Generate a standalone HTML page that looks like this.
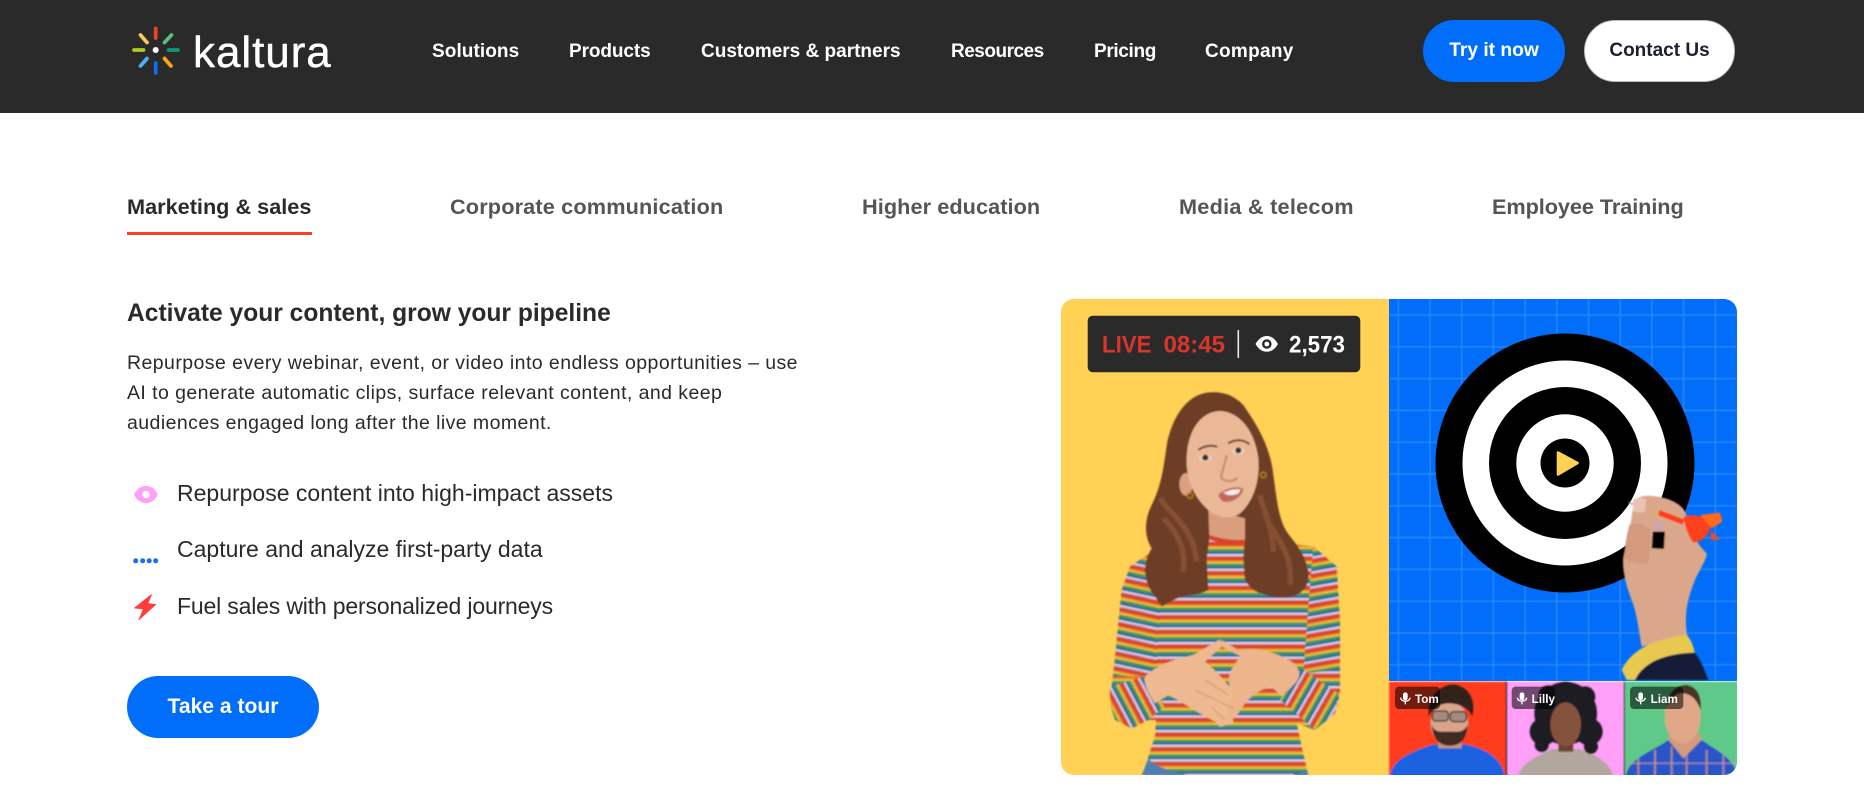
<!DOCTYPE html>
<html lang="en">
<head>
<meta charset="utf-8">
<title>Kaltura</title>
<style>
html,body{margin:0;padding:0;background:#fff;}
body{position:relative;width:1864px;height:794px;overflow:hidden;font-family:"Liberation Sans",Arial,sans-serif;}
.t{position:absolute;white-space:nowrap;line-height:30px;}
header{position:absolute;left:0;top:0;width:1864px;height:113px;background:#2a2a2a;}
.nav{color:#fff;font-weight:700;font-size:19px;top:37px;}
.tab{color:#555;font-weight:700;font-size:21.7px;top:192px;}
.btn{position:absolute;box-sizing:border-box;display:block;text-align:center;font-weight:700;border-radius:31px;}
.li{color:#2a2a2a;font-size:23px;}
.p{color:#2a2a2a;font-size:19.5px;letter-spacing:.43px;}
</style>
</head>
<body>
<header>
  <svg style="position:absolute;left:130px;top:24px" width="52" height="52" viewBox="130 24 52 52">
    <g fill="none" stroke-width="3.7" stroke-linecap="round">
      <path d="M155.7 28.5V38" stroke="#f5402c"/>
      <path d="M155.7 63V73" stroke="#0a6ff0"/>
      <path d="M134 50H143.5" stroke="#b7c81e"/>
      <path d="M168.5 50H178" stroke="#0f9a75"/>
      <path d="M140.5 35L147 42.5" stroke="#f8c85a"/>
      <path d="M171.5 35L164.5 42.5" stroke="#5cbf80"/>
      <path d="M140.5 66L147 58.5" stroke="#4fb0ef"/>
      <path d="M171 66L164.5 58.5" stroke="#fda50f"/>
    </g>
    <circle cx="155.7" cy="50" r="3" fill="#fff"/>
  </svg>
  <div class="t" style="left:193px;top:30px;color:#fff;font-size:44px;line-height:46px;letter-spacing:.95px;-webkit-text-stroke:.4px #fff">kaltura</div>
  <a class="t nav" style="left:432px;letter-spacing:.08px">Solutions</a>
  <a class="t nav" style="left:569px;letter-spacing:-.1px">Products</a>
  <a class="t nav" style="left:701px">Customers &amp; partners</a>
  <a class="t nav" style="left:951px;letter-spacing:-.5px">Resources</a>
  <a class="t nav" style="left:1094px;letter-spacing:-.35px">Pricing</a>
  <a class="t nav" style="left:1205px;letter-spacing:.3px">Company</a>
  <a class="btn" style="left:1423px;top:20px;width:142px;height:62px;background:#006efa;color:#fff;font-size:19.2px;line-height:62px">Try it now</a>
  <a class="btn" style="left:1584px;top:20px;width:151px;height:62px;background:#fff;color:#1c2030;font-size:19px;line-height:60px;border:1px solid #bdbdbd">Contact Us</a>
</header>

<nav>
  <a class="t tab" style="left:127px;color:#2a2a2a">Marketing &amp; sales</a>
  <a class="t tab" style="left:450px;letter-spacing:.15px">Corporate communication</a>
  <a class="t tab" style="left:862px;letter-spacing:.07px">Higher education</a>
  <a class="t tab" style="left:1179px;letter-spacing:.24px">Media &amp; telecom</a>
  <a class="t tab" style="left:1492px;letter-spacing:-.07px">Employee Training</a>
</nav>
<div style="position:absolute;left:127px;top:232px;width:185px;height:3px;background:#ff3d23"></div>

<h3 class="t" style="left:127px;top:299px;margin:0;font-size:24.6px;font-weight:700;color:#2a2a2a">Activate your content, grow your pipeline</h3>
<div class="t p" style="left:127px;top:348px">Repurpose every webinar, event, or video into endless opportunities – use</div>
<div class="t p" style="left:127px;top:378px">AI to generate automatic clips, surface relevant content, and keep</div>
<div class="t p" style="left:127px;top:408px">audiences engaged long after the live moment.</div>

<svg style="position:absolute;left:130px;top:480px" width="32" height="145" viewBox="130 480 32 145">
  <path d="M134 494.5C137 488.5 141 486 146 486C151 486 155 488.5 157.7 494.5C155 500.5 151 503 146 503C141 503 137 500.5 134 494.5Z" fill="#ff9ff8"/>
  <circle cx="146" cy="494.5" r="3.8" fill="#fff"/>
  <g fill="#1f6ff5"><circle cx="135.7" cy="560.8" r="2.5"/><circle cx="142.7" cy="560.8" r="2.5"/><circle cx="149.2" cy="560.8" r="2.5"/><circle cx="155.7" cy="560.8" r="2.5"/></g>
  <path d="M151.5 594.5L134.5 608L143.5 609L138.8 619.8L155.8 604.5L148 603.5Z" fill="#ff3b3b" stroke="#ff3b3b" stroke-width=".7" stroke-linejoin="round"/>
</svg>
<div class="t li" style="left:177px;top:478px">Repurpose content into high-impact assets</div>
<div class="t li" style="left:177px;top:534px">Capture and analyze first-party data</div>
<div class="t li" style="left:177px;top:591px;letter-spacing:-.17px">Fuel sales with personalized journeys</div>
<a class="btn" style="left:127px;top:676px;width:192px;height:62px;background:#006efa;color:#fff;font-size:21.1px;line-height:62px">Take a tour</a>

<svg style="position:absolute;left:1061px;top:299px" width="676" height="476" viewBox="1061 299 676 476">
  <defs>
    <clipPath id="card"><rect x="1061" y="299" width="676" height="476" rx="13"/></clipPath>
    <filter id="soft" x="-5%" y="-5%" width="110%" height="110%"><feGaussianBlur stdDeviation=".6"/></filter>
    <filter id="soft2" x="-5%" y="-5%" width="110%" height="110%"><feGaussianBlur stdDeviation="2.6"/></filter>
    <g id="st">
      <rect width="60" height="5" y="0" fill="#e5cfe6"/>
      <rect width="60" height="3" y="5" fill="#c8a6d8"/>
      <rect width="60" height="11" y="8" fill="#d8452a"/>
      <rect width="60" height="5" y="19" fill="#ee8a2e"/>
      <rect width="60" height="5" y="24" fill="#eec530"/>
      <rect width="60" height="7" y="29" fill="#3f9a5c"/>
      <rect width="60" height="8" y="36" fill="#2a6f9c"/>
    </g>
    <pattern id="p0" width="60" height="44" patternUnits="userSpaceOnUse"><use href="#st"/></pattern>
    <pattern id="p1" width="60" height="44" patternUnits="userSpaceOnUse" patternTransform="rotate(12)"><use href="#st"/></pattern>
    <pattern id="p2" width="60" height="44" patternUnits="userSpaceOnUse" patternTransform="rotate(-10)"><use href="#st"/></pattern>
    <pattern id="p3" width="60" height="44" patternUnits="userSpaceOnUse" patternTransform="rotate(62)"><use href="#st"/></pattern>
    <pattern id="p4" width="60" height="44" patternUnits="userSpaceOnUse" patternTransform="rotate(-60)"><use href="#st"/></pattern>
  </defs>
  <g clip-path="url(#card)">
    <rect x="1061" y="299" width="328" height="476" fill="#ffd155"/>
    <rect x="1389" y="299" width="348" height="382" fill="#006efa"/>
    <g stroke="#5da5fb" stroke-width="1.2" opacity=".55" filter="url(#soft)">
      <path d="M1398.3 299V681M1430 299V681M1461.7 299V681M1493.4 299V681M1525.1 299V681M1556.8 299V681M1588.5 299V681M1620.2 299V681M1651.9 299V681M1683.6 299V681M1715.3 299V681"/>
      <path d="M1389 315H1737M1389 346.8H1737M1389 378.6H1737M1389 410.4H1737M1389 442.2H1737M1389 474H1737M1389 505.8H1737M1389 537.6H1737M1389 569.4H1737M1389 601.2H1737M1389 633H1737M1389 664.8H1737"/>
    </g>

    <!-- target -->
    <circle cx="1565" cy="463" r="129.5" fill="#000"/>
    <circle cx="1565" cy="463" r="102.5" fill="#fff"/>
    <circle cx="1565" cy="463" r="76" fill="#000"/>
    <circle cx="1565" cy="463" r="48.7" fill="#fff"/>
    <circle cx="1565" cy="463" r="24.5" fill="#000"/>
    <path d="M1558 452.5L1577.5 463L1558 474.5Z" fill="#ffd155" stroke="#ffd155" stroke-width="2.6" stroke-linejoin="round"/>

    <!-- hand & dart -->
    <g transform="translate(1600 480) scale(.33333)" filter="url(#soft2)">
      <path d="M85 68L105 74" stroke="#8a8f98" stroke-width="4"/>
      <path d="M100 70C110 45 145 45 170 50C210 55 255 75 260 110C265 150 290 190 320 220C320 240 300 265 285 300C265 350 250 400 262 470C220 480 160 490 125 500C115 440 110 400 95 360C80 320 65 270 70 230C80 180 95 130 100 70Z" fill="#dba78a"/>
      <path d="M100 60C115 50 130 52 138 60L135 95C122 100 108 98 98 92Z" fill="#e9c3b0"/>
      <path d="M160 120L195 125L190 155L160 150Z" fill="#cfa6a8"/>
      <path d="M158 155L195 155L192 207L155 205Z" fill="#000"/>
      <path d="M88 135C110 125 135 130 150 150C150 180 150 220 145 248C120 255 90 245 72 235C74 200 80 165 88 135Z" fill="#d39a7e"/>
      <path d="M155 90L180 102L175 115L155 103Z" fill="#d8b070"/>
      <path d="M178 90L252 118L248 134L175 106Z" fill="#ff3a1a"/>
      <path d="M250 112C270 100 310 105 332 130C332 160 310 185 280 188C265 170 255 140 250 112Z" fill="#ff3f1c"/>
      <path d="M300 105L360 98L367 125L335 145Z" fill="#ff6a1a"/>
      <path d="M333 152L360 180L333 178Z" fill="#ff4a1c"/>
      <path d="M65 570C90 520 140 480 260 465C275 480 280 500 285 520C200 520 140 540 105 600L80 600Z" fill="#e9c850"/>
      <path d="M105 600C130 545 200 520 285 518C305 545 315 575 325 600Z" fill="#141a38"/>
    </g>

    <!-- participants -->
    <g transform="translate(1385 675) scale(.33333)" filter="url(#soft2)">
      <rect x="12" y="20" width="352" height="290" fill="#ff3d1f"/>
      <rect x="367" y="20" width="350" height="290" fill="#ff9ff8"/>
      <rect x="720" y="20" width="345" height="290" fill="#5fc98a"/>
      <rect x="362" y="20" width="5" height="290" fill="#3a2a2a"/>
      <rect x="716" y="20" width="4" height="290" fill="#3a3a3a"/>
      <!-- Tom -->
      <path d="M15 305C20 260 60 235 145 208L245 208C310 225 350 250 360 305Z" fill="#1f62e0"/>
      <rect x="160" y="180" width="70" height="40" fill="#c99278"/>
      <ellipse cx="193" cy="145" rx="56" ry="66" fill="#d9a48a"/>
      <path d="M140 150C145 200 170 212 195 212C225 212 245 195 248 150C235 175 215 170 195 170C170 170 150 175 140 150Z" fill="#3f2a22"/>
      <path d="M130 125C125 60 170 25 210 28C255 35 275 80 262 125C250 100 225 85 190 85C165 85 145 100 130 125Z" fill="#33241f"/>
      <rect x="142" y="108" width="48" height="30" rx="10" fill="#a58a80" stroke="#3a3030" stroke-width="4"/>
      <rect x="196" y="110" width="48" height="30" rx="10" fill="#a58a80" stroke="#3a3030" stroke-width="4"/>
      <!-- Lilly -->
      <path d="M400 305C405 260 470 240 500 222L585 222C630 240 675 260 685 305Z" fill="#b1a79e"/>
      <g fill="#1f1a22">
        <circle cx="542" cy="115" r="95"/><circle cx="475" cy="170" r="42"/><circle cx="612" cy="170" r="42"/><circle cx="490" cy="60" r="30"/><circle cx="600" cy="65" r="32"/><circle cx="470" cy="210" r="22"/><circle cx="618" cy="215" r="22"/>
      </g>
      <rect x="520" y="190" width="45" height="40" fill="#6d4030"/>
      <ellipse cx="542" cy="148" rx="46" ry="66" fill="#85533e"/>
      <!-- Liam -->
      <path d="M722 305C730 250 800 230 850 195L950 195C1000 230 1050 250 1056 305Z" fill="#2a55c8"/>
      <path d="M760 250V305M810 225V305M860 215V305M905 235V305M965 225V305M1015 240V305" stroke="#e89a70" stroke-width="6" opacity=".7"/>
      <path d="M735 265H1050" stroke="#d8a0a0" stroke-width="5" opacity=".6"/>
      <path d="M850 195L895 250L950 195L945 175H855Z" fill="#d49a7c"/>
      <ellipse cx="893" cy="125" rx="54" ry="80" fill="#e0a886"/>
      <path d="M845 95C845 50 880 28 905 30C935 35 950 60 948 105C935 75 920 55 890 55C870 55 855 75 845 95Z" fill="#4a3027"/>
    </g>
    <g transform="translate(1385 675) scale(.33333)">
      <!-- labels -->
      <rect x="30" y="35" width="135" height="67" rx="12" fill="#000" opacity=".55"/>
      <rect x="380" y="35" width="130" height="67" rx="12" fill="#000" opacity=".55"/>
      <rect x="735" y="35" width="160" height="67" rx="12" fill="#000" opacity=".55"/>
      <g fill="#fff">
        <rect x="54" y="52" width="14" height="24" rx="7"/><path d="M47 68C48 82 74 82 75 68M61 80V88" fill="none" stroke="#fff" stroke-width="4"/>
        <rect x="404" y="52" width="14" height="24" rx="7"/><path d="M397 68C398 82 424 82 425 68M411 80V88" fill="none" stroke="#fff" stroke-width="4"/>
        <rect x="760" y="52" width="14" height="24" rx="7"/><path d="M753 68C754 82 780 82 781 68M767 80V88" fill="none" stroke="#fff" stroke-width="4"/>
        <text x="90" y="84" font-size="35" font-weight="700" font-family="Liberation Sans, sans-serif">Tom</text>
        <text x="440" y="84" font-size="35" font-weight="700" font-family="Liberation Sans, sans-serif">Lilly</text>
        <text x="797" y="84" font-size="35" font-weight="700" font-family="Liberation Sans, sans-serif">Liam</text>
      </g>
    </g>

    <!-- woman -->
    <g transform="translate(1050 290) scale(.33333)" filter="url(#soft2)">
      <path d="M475 740Q530 755 585 745L790 770L860 830L870 1000L870 1210L855 1270L795 1320L740 1300L755 1370L775 1456L290 1456L295 1400L305 1370L315 1340L318 1290L295 1290L245 1315L195 1290L180 1240L185 1190L195 1100L205 1000L215 900L240 830L300 790Z" fill="url(#p0)"/>
      <path d="M240 830L300 790L330 950L318 1120L300 1160L190 1160L205 1000L215 900Z" fill="url(#p1)"/>
      <path d="M790 770L860 830L870 1000L868 1140L760 1150L775 950Z" fill="url(#p2)"/>
      <path d="M180 1190L280 1160L300 1210L350 1245L295 1290L245 1315L195 1290L180 1240Z" fill="url(#p3)"/>
      <path d="M755 1135L865 1210L855 1270L795 1320L690 1230Z" fill="url(#p4)"/>
      <path d="M275 1456L295 1405C315 1430 365 1445 415 1456ZM725 1456L770 1440L775 1456Z" fill="#4f7fae"/>
      <g transform="translate(165 870)">
        <path d="M120 290C160 250 220 235 265 225L345 178L350 200L300 245C330 270 370 310 385 340L400 375L380 385L385 430L345 440L330 425C280 400 230 365 190 345L150 370C130 340 115 310 120 290Z" fill="#eeb990"/>
        <path d="M350 180L400 210C450 200 510 215 560 245C585 265 590 290 570 310L530 350L500 320C460 330 430 350 400 400L370 430L365 380L385 345C370 320 365 290 385 260L405 228L350 200Z" fill="#ecb58c"/>
        <path d="M300 300L370 345M270 330L385 385M320 380L360 420" fill="none" stroke="#d3936e" stroke-width="4" opacity=".7"/>
      </g>
      <g transform="translate(240 285)">
        <path d="M240 22C175 25 130 90 112 170C100 250 95 300 65 360C45 400 40 450 65 490C35 540 40 590 75 635L95 665C120 650 140 640 155 635C190 630 220 625 235 615L230 520L240 450L345 450L340 520L345 585C360 610 380 625 395 625C430 640 460 640 485 635C520 625 540 600 535 560C525 500 490 470 470 440C445 400 440 340 430 270C420 180 380 120 340 60C310 30 280 20 240 22Z" fill="#6e3d28"/>
        <path d="M100 400C130 430 170 480 160 560M420 420C450 470 490 520 480 600M90 340C110 380 190 420 200 530M390 330C400 380 430 430 430 500" fill="none" stroke="#9a5f3c" stroke-width="16" opacity=".55"/>
        <path d="M235 370L345 400L345 470C310 468 270 460 238 450Z" fill="#d99e7e"/>
        <path d="M238 450C270 460 310 468 345 464L345 478C310 480 270 476 238 464Z" fill="#d8452a"/>
        <ellipse cx="168" cy="298" rx="20" ry="34" fill="#dca080"/>
        <path d="M170 230C170 140 210 80 270 78C330 80 375 140 385 220C390 290 370 350 330 385C300 405 260 400 235 375C195 340 170 290 170 230Z" fill="#eab897"/>
        <path d="M205 195C225 180 250 180 262 186M295 175C320 160 345 165 358 178" fill="none" stroke="#6b3f2c" stroke-width="6"/>
        <ellipse cx="226" cy="220" rx="19" ry="11" fill="#e6cfc0"/><circle cx="226" cy="218" r="9" fill="#4a2a1c"/>
        <ellipse cx="325" cy="198" rx="19" ry="11" fill="#e6cfc0"/><circle cx="325" cy="196" r="9" fill="#4a2a1c"/>
        <path d="M290 210C285 240 270 270 275 280C290 292 310 290 322 278" fill="none" stroke="#c98e70" stroke-width="7"/>
        <path d="M265 328C285 310 325 300 340 312C335 340 300 355 280 350C272 345 268 338 265 328Z" fill="#c4675c"/>
        <path d="M280 324C295 315 320 310 332 314L325 326C310 332 292 332 280 324Z" fill="#f8eee8"/>
        <circle cx="180" cy="332" r="8" fill="none" stroke="#b07a18" stroke-width="5"/>
        <circle cx="400" cy="270" r="8" fill="none" stroke="#b07a18" stroke-width="5"/>
      </g>
    </g>

    <!-- live badge -->
    <rect x="1087.7" y="315.7" width="272.6" height="56.5" rx="5" fill="#2a2a2a"/>
    <g font-family="Liberation Sans, sans-serif" font-weight="700" font-size="24">
      <text x="1102" y="352.5" fill="#d9352b" textLength="49.5" lengthAdjust="spacingAndGlyphs">LIVE</text>
      <text x="1163.5" y="352.5" fill="#d9352b" textLength="61.5" lengthAdjust="spacingAndGlyphs">08:45</text>
      <text x="1289" y="352.5" fill="#fff" textLength="56" lengthAdjust="spacingAndGlyphs">2,573</text>
    </g>
    <rect x="1237.5" y="330" width="1.6" height="28" fill="#e8e8e8"/>
    <path d="M1255.5 344C1259 338 1263 336 1266.8 336C1270.5 336 1274.5 338 1278 344C1274.5 350 1270.5 351.7 1266.8 351.7C1263 351.7 1259 350 1255.5 344Z" fill="#fff"/>
    <circle cx="1266.8" cy="344" r="4.8" fill="#2a2a2a"/>
    <circle cx="1266.8" cy="344" r="2.4" fill="#fff"/>
  </g>
</svg>
</body>
</html>
